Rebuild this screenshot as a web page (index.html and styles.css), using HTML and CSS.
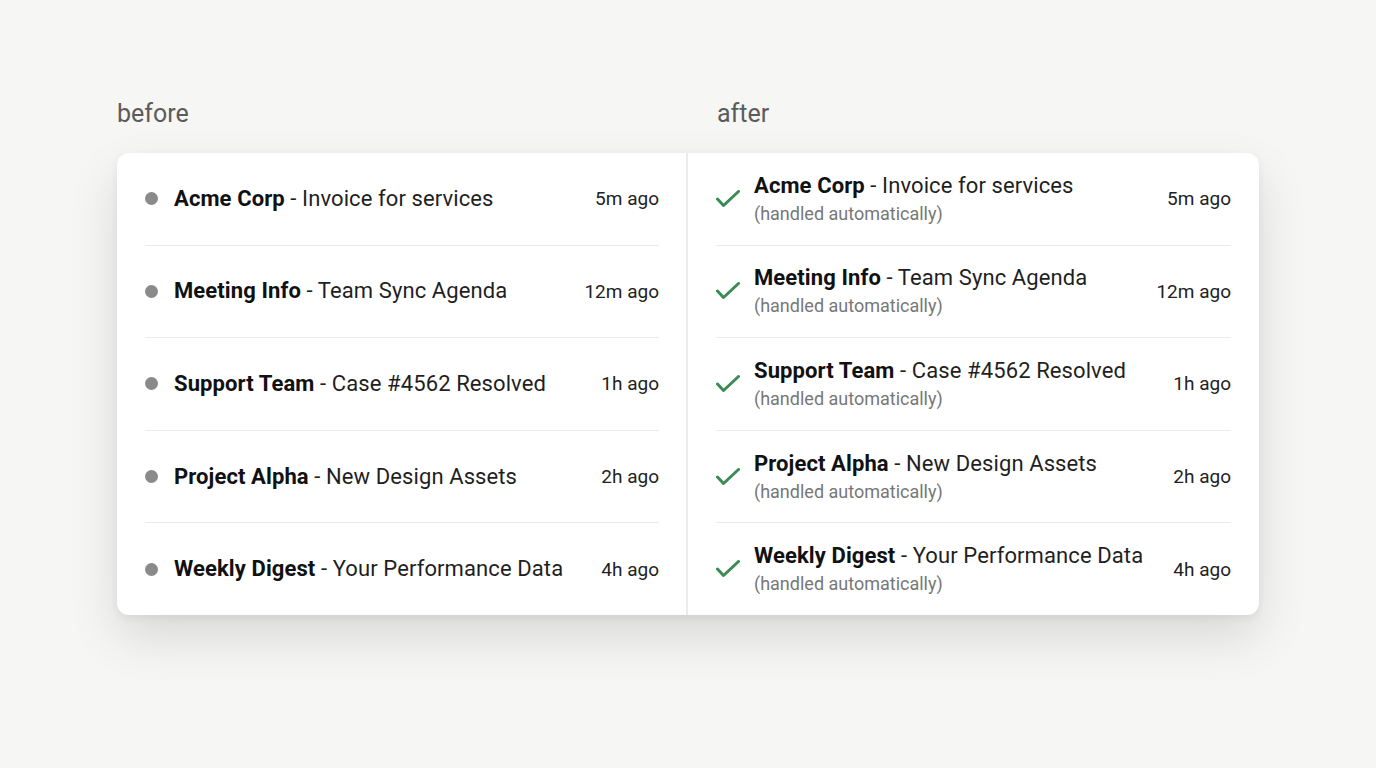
FILE: index.html
```html
<!DOCTYPE html>
<html>
<head>
<meta charset="utf-8">
<link rel="stylesheet" href="styles.css">
</head>
<body>
<div class="page">
  <div class="labels">
    <div class="label label-before">before</div>
    <div class="label label-after">after</div>
  </div>
  <div class="card">
    <div class="col col-before">
      <div class="row"><span class="dot"></span><div class="title"><b>Acme Corp</b> - Invoice for services</div><span class="time">5m ago</span></div>
      <div class="row"><span class="dot"></span><div class="title"><b>Meeting Info</b> - Team Sync Agenda</div><span class="time">12m ago</span></div>
      <div class="row"><span class="dot"></span><div class="title"><b>Support Team</b> - Case #4562 Resolved</div><span class="time">1h ago</span></div>
      <div class="row"><span class="dot"></span><div class="title"><b>Project Alpha</b> - New Design Assets</div><span class="time">2h ago</span></div>
      <div class="row"><span class="dot"></span><div class="title"><b>Weekly Digest</b> - Your Performance Data</div><span class="time">4h ago</span></div>
    </div>
    <div class="col col-after">
      <div class="row"><svg class="check" viewBox="0 0 24 18"><path d="M1.5 9 L7.5 15.5 L22.5 1.5"/></svg><div class="text"><div class="title"><b>Acme Corp</b> - Invoice for services</div><div class="sub">(handled automatically)</div></div><span class="time">5m ago</span></div>
      <div class="row"><svg class="check" viewBox="0 0 24 18"><path d="M1.5 9 L7.5 15.5 L22.5 1.5"/></svg><div class="text"><div class="title"><b>Meeting Info</b> - Team Sync Agenda</div><div class="sub">(handled automatically)</div></div><span class="time">12m ago</span></div>
      <div class="row"><svg class="check" viewBox="0 0 24 18"><path d="M1.5 9 L7.5 15.5 L22.5 1.5"/></svg><div class="text"><div class="title"><b>Support Team</b> - Case #4562 Resolved</div><div class="sub">(handled automatically)</div></div><span class="time">1h ago</span></div>
      <div class="row"><svg class="check" viewBox="0 0 24 18"><path d="M1.5 9 L7.5 15.5 L22.5 1.5"/></svg><div class="text"><div class="title"><b>Project Alpha</b> - New Design Assets</div><div class="sub">(handled automatically)</div></div><span class="time">2h ago</span></div>
      <div class="row"><svg class="check" viewBox="0 0 24 18"><path d="M1.5 9 L7.5 15.5 L22.5 1.5"/></svg><div class="text"><div class="title"><b>Weekly Digest</b> - Your Performance Data</div><div class="sub">(handled automatically)</div></div><span class="time">4h ago</span></div>
    </div>
  </div>
</div>
</body>
</html>
```

FILE: styles.css
```css
html, body {
  margin: 0;
  padding: 0;
}
body {
  background: #f6f7f4;
  font-family: Roboto, "Noto Sans", sans-serif;
  color: #1c1c1c;
  width: 1376px;
  height: 768px;
  overflow: hidden;
}
.page {
  padding: 99px 0 0 117px;
}
.labels {
  display: flex;
  height: 30px;
  margin-bottom: 24px;
}
.label {
  font-size: 25px;
  line-height: 30px;
  color: #5b5b5b;
}
.label-before {
  width: 600px;
}
.card {
  width: 1142px;
  height: 462px;
  background: #fff;
  border-radius: 12px;
  box-shadow: 0 22px 50px rgba(0, 0, 0, 0.12), 0 3px 8px rgba(0, 0, 0, 0.06);
  display: grid;
  grid-template-columns: 571px 571px;
}
.col {
  display: flex;
  flex-direction: column;
  padding: 0 28px;
}
.col-before {
  border-right: 2px solid #ececec;
  padding-right: 27px;
}
.row {
  flex: 1;
  display: flex;
  align-items: center;
  border-bottom: 1px solid #e8eaed;
}
.row:last-child {
  border-bottom: none;
}
.dot {
  width: 13px;
  height: 13px;
  border-radius: 50%;
  background: #8a8a8a;
  margin-right: 16px;
  flex: none;
}
.title {
  font-size: 22px;
  line-height: 28px;
  letter-spacing: 0.1px;
  color: #1f1f1f;
  flex: 1;
  white-space: nowrap;
}
.title b {
  font-weight: 700;
  color: #111;
}
.text {
  flex: 1;
  padding-top: 2px;
}
.sub {
  font-size: 18px;
  line-height: 28px;
  color: #777;
  white-space: nowrap;
}
.time {
  font-size: 19px;
  color: #222;
  flex: none;
}
.check {
  width: 24px;
  height: 18px;
  margin-right: 14px;
  flex: none;
  fill: none;
  stroke: #3b8b55;
  stroke-width: 3;
  stroke-linecap: round;
  stroke-linejoin: round;
}
```
